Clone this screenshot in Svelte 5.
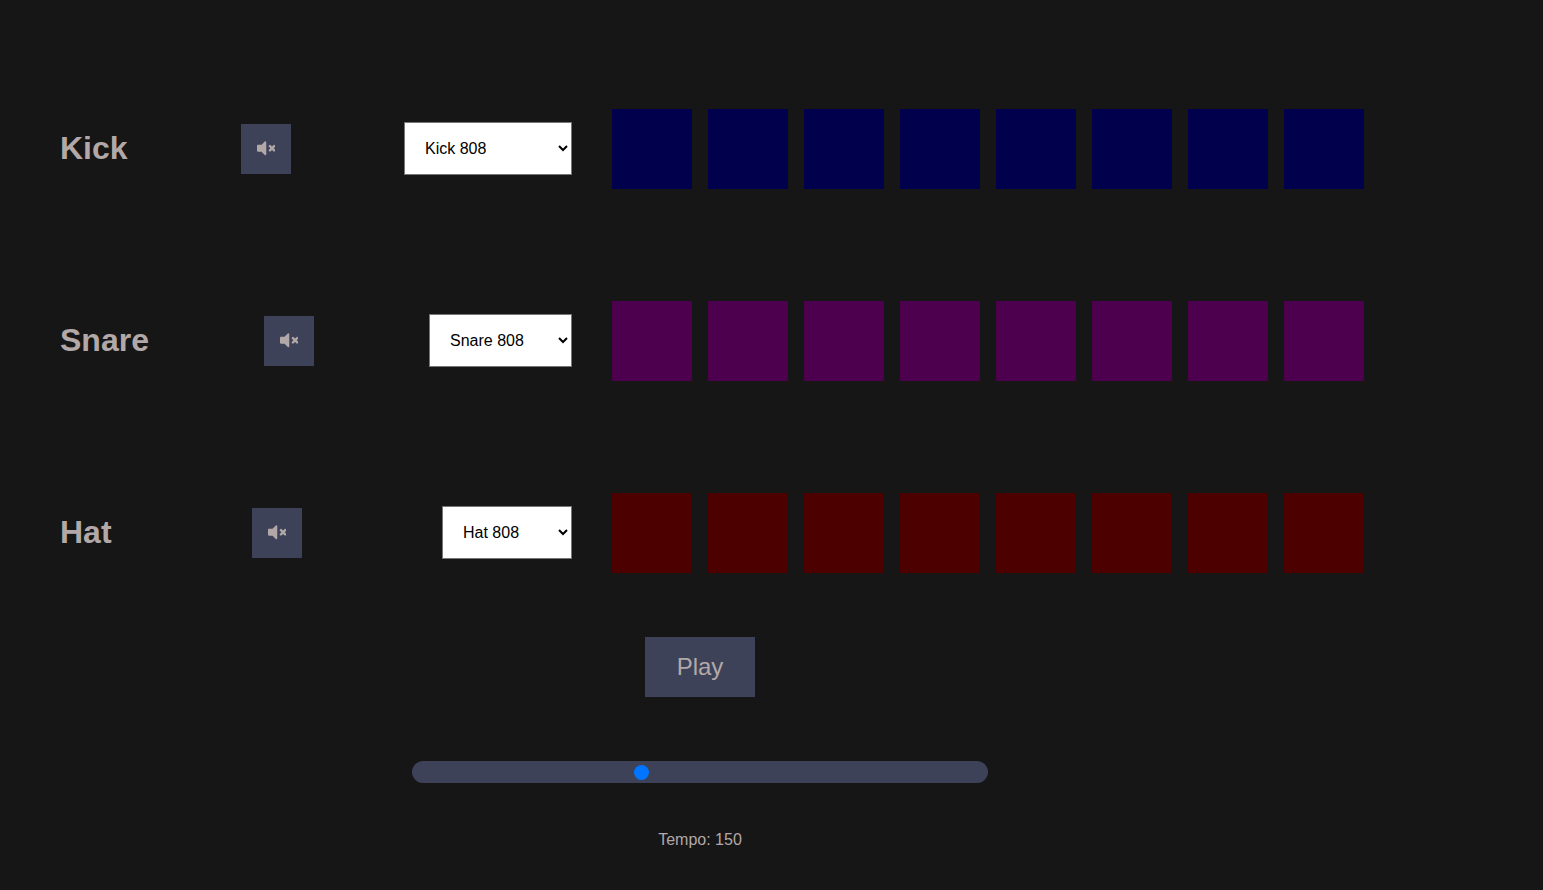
<script lang="ts">
  const tracks = [
    { name: "Kick", sound: "Kick 808", id: "kick" },
    { name: "Snare", sound: "Snare 808", id: "snare" },
    { name: "Hat", sound: "Hat 808", id: "hat" },
  ];
  const steps = [0, 1, 2, 3, 4, 5, 6, 7];

  let tempo = 150;
</script>

<main class="sequencer">
  {#each tracks as track}
    <section class="track {track.id}">
      <div class="controls">
        <h1>{track.name}</h1>
        <button class="mute" aria-label="Mute {track.name}">
          <svg viewBox="0 0 512 512" aria-hidden="true">
            <path
              d="M215.03 71.05L126.06 160H24c-13.26 0-24 10.74-24 24v144c0 13.25 10.74 24 24 24h102.06l88.97 88.95c15.03 15.03 40.97 4.47 40.97-16.97V88.02c0-21.46-25.96-31.98-40.97-16.97zM461.64 256l45.64-45.64c6.3-6.3 6.3-16.52 0-22.82l-22.82-22.82c-6.3-6.3-16.52-6.3-22.82 0L416 210.36l-45.64-45.64c-6.3-6.3-16.52-6.3-22.82 0l-22.82 22.82c-6.3 6.3-6.3 16.52 0 22.82L370.36 256l-45.64 45.64c-6.3 6.3-6.3 16.52 0 22.82l22.82 22.82c6.3 6.3 16.52 6.3 22.82 0L416 301.64l45.64 45.64c6.3 6.3 16.52 6.3 22.82 0l22.82-22.82c6.3-6.3 6.3-16.52 0-22.82L461.64 256z"
            />
          </svg>
        </button>
        <select>
          <option>{track.sound}</option>
        </select>
      </div>
      <div class="pads">
        {#each steps as step (step)}
          <div class="pad"></div>
        {/each}
      </div>
    </section>
  {/each}

  <button class="play">Play</button>
  <input class="tempo-slider" type="range" min="20" max="348" bind:value={tempo} />
  <p class="tempo">Tempo: {tempo}</p>
</main>

<style>
  :global(body) {
    background: #161616;
  }

  .sequencer {
    display: flex;
    flex-direction: column;
    align-items: center;
    width: 1400px;
    min-height: 890px;
    box-sizing: border-box;
    padding-top: 53px;
    color: #b3a8a8;
    font-family: "Liberation Sans", Arial, sans-serif;
  }

  .track {
    display: flex;
    align-items: center;
    align-self: stretch;
    height: 192px;
    padding-left: 60px;
  }

  .controls {
    display: flex;
    align-items: center;
    justify-content: space-between;
    width: 512px;
    margin-right: 40px;
  }

  h1 {
    margin: 0 0 2px;
    font-size: 32px;
    font-weight: 700;
  }

  button {
    border: none;
    background: #3e4259;
    color: inherit;
    font-family: inherit;
  }

  .mute {
    display: grid;
    place-items: center;
    width: 50px;
    height: 50px;
    padding: 0;
  }

  .mute svg {
    width: 18.5px;
    height: 18.5px;
    margin-bottom: 2px;
    fill: currentColor;
  }

  select {
    margin-bottom: 2px;
    padding: 16px;
    background: #fff;
    font-family: inherit;
    font-size: 16px;
  }

  .kick select {
    width: 168px;
  }

  .snare select {
    width: 143px;
  }

  .hat select {
    width: 130px;
  }

  .pads {
    display: flex;
    gap: 16px;
  }

  .pad {
    width: 80px;
    height: 80px;
  }

  .kick .pad {
    background: #00004d;
  }

  .snare .pad {
    background: #4d004d;
  }

  .hat .pad {
    background: #4d0000;
  }

  .play {
    width: 110px;
    height: 60px;
    margin-top: 8px;
    font-size: 24px;
  }

  .tempo-slider {
    width: 576px;
    height: 22px;
    margin: 64px 0 0;
    border-radius: 11px;
    background: #3e4259;
    appearance: none;
    -webkit-appearance: none;
    outline: none;
  }

  .tempo-slider::-webkit-slider-thumb {
    width: 15px;
    height: 15px;
    border-radius: 50%;
    background: #0075ff;
    appearance: none;
    -webkit-appearance: none;
  }

  .tempo {
    margin: 48px 0 0;
    font-size: 16px;
  }
</style>
